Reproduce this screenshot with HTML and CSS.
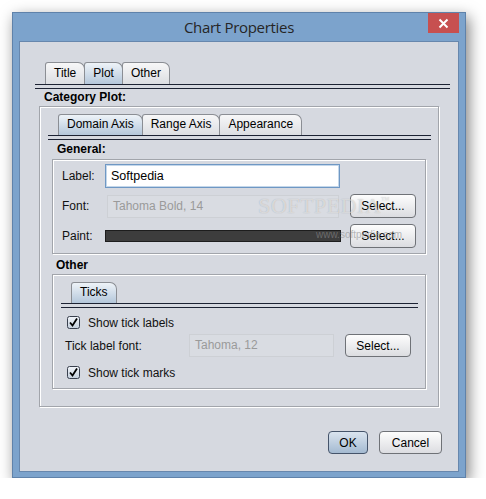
FILE: index.html
```html
<!DOCTYPE html>
<html>
<head>
<meta charset="utf-8">
<link rel="stylesheet" href="styles.css">
</head>
<body>
<div class="window">
  <div class="titlebar">
    <span class="title">Chart Properties</span>
    <span class="close"><svg width="11" height="11" viewBox="0 0 11 11"><path d="M1.5 1.5 L9.5 9.5 M9.5 1.5 L1.5 9.5" stroke="#fff" stroke-width="2"/></svg></span>
  </div>
  <div class="client">
    <div class="outer">
      <div class="tabrow">
        <span class="tab">Title</span><span class="tab sel">Plot</span><span class="tab">Other</span>
      </div>
      <div class="rule"></div>
      <div class="outer-body">
        <div class="group-title">Category Plot:</div>
        <div class="etched cat-box">
          <div class="tabrow small">
            <span class="tab sel">Domain Axis</span><span class="tab">Range Axis</span><span class="tab">Appearance</span>
          </div>
          <div class="rule"></div>
          <div class="sec-title general-title">General:</div>
          <div class="etched general-box">
            <span class="lbl">Label:</span>
            <div class="field focus">Softpedia</div>
            <span></span>
            <span class="lbl">Font:</span>
            <div class="field disabled">Tahoma Bold, 14</div>
            <button class="btn sel-btn">Select...</button>
            <span class="lbl">Paint:</span>
            <div class="paint"></div>
            <button class="btn sel-btn">Select...</button>
          </div>
          <div class="sec-title other-title">Other</div>
          <div class="etched other-box">
            <div class="tabrow small">
              <span class="tab sel">Ticks</span>
            </div>
            <div class="rule"></div>
            <div class="ticks-body">
              <label class="check-row">
                <svg class="cb" width="13" height="13" viewBox="0 0 13 13"><defs><linearGradient id="g1" x1="0" y1="0" x2="0" y2="1"><stop offset="0" stop-color="#f2f5f9"/><stop offset="1" stop-color="#c3cfdc"/></linearGradient></defs><rect x="0.5" y="0.5" width="12" height="12" rx="2" fill="url(#g1)" stroke="#39404e"/><path d="M3 6.5 L5.5 9.5 L10 2.5" fill="none" stroke="#000" stroke-width="1.8"/></svg>
                <span>Show tick labels</span>
              </label>
              <div class="font-row">
                <span class="lbl">Tick label font:</span>
                <div class="field disabled">Tahoma, 12</div>
                <button class="btn sel-btn">Select...</button>
              </div>
              <label class="check-row last">
                <svg class="cb" width="13" height="13" viewBox="0 0 13 13"><defs><linearGradient id="g2" x1="0" y1="0" x2="0" y2="1"><stop offset="0" stop-color="#f2f5f9"/><stop offset="1" stop-color="#c3cfdc"/></linearGradient></defs><rect x="0.5" y="0.5" width="12" height="12" rx="2" fill="url(#g2)" stroke="#39404e"/><path d="M3 6.5 L5.5 9.5 L10 2.5" fill="none" stroke="#000" stroke-width="1.8"/></svg>
                <span>Show tick marks</span>
              </label>
            </div>
          </div>
        </div>
      </div>
    </div>
    <div class="actions">
      <button class="btn default ok">OK</button>
      <button class="btn cancel">Cancel</button>
    </div>
  </div>
</div>
<div class="wm-logo">SOFTPEDIA<sup>™</sup></div>
<div class="wm-url">www.softpedia.com</div>
</body>
</html>
```
FILE: styles.css
```css
* { box-sizing: border-box; }
body {
  margin: 0;
  background: #fff;
  font-family: "Liberation Sans", Arial, sans-serif;
  font-size: 12px;
  color: #111;
}
.window {
  margin: 12px 0 0 12px;
  width: 454px;
  height: 466px;
  border: 1px solid #5f82aa;
  background: #7ca3cc;
  padding: 0 6px 5px;
  box-shadow: 3px 5px 14px rgba(0,0,0,0.5);
  display: flex;
  flex-direction: column;
}
.titlebar {
  height: 28px;
  margin: 0 -6px;
  position: relative;
  text-align: center;
}
.title {
  font-family: "Open Sans", "Noto Sans", sans-serif;
  font-size: 15px;
  letter-spacing: -0.3px;
  line-height: 29px;
  color: #262626;
}
.close {
  position: absolute;
  right: 6px;
  top: 0;
  width: 31px;
  height: 20px;
  background: #c75050;
  display: flex;
  align-items: center;
  justify-content: center;
}
.client {
  flex: 1;
  background: #d6d9e0;
  border: 1px solid #6787ad;
  padding-top: 20px;
  display: flex;
  flex-direction: column;
}
.outer { margin: 0 8px 0 15px; }
.tabrow {
  display: flex;
  padding-left: 10px;
  height: 22px;
  align-items: flex-end;
}
.tabrow.small { height: 21px; }
.tab {
  height: 100%;
  line-height: 20px;
  padding: 0 8px;
  border: 1px solid #8b8e94;
  border-bottom: 0;
  border-radius: 3px 7px 0 0;
  background: linear-gradient(#f7f7f8, #dcdee2);
  margin-right: -1px;
  color: #000;
}
.tabrow.small .tab { line-height: 19px; padding: 0 8px; }
.tab.sel { background: linear-gradient(#eef3f8, #b4c7db); }
.rule {
  height: 5px;
  border-top: 1px solid #1c2233;
  border-bottom: 1px solid #1c2233;
}
.outer-body { margin: 0 11px 0 4px; }
.group-title {
  height: 17px;
  line-height: 17px;
  padding-left: 5px;
  font-weight: bold;
  color: #000;
}
.etched {
  border: 1px solid #a2a5ab;
  box-shadow: inset 1px 1px 0 #fff, 1px 1px 0 #fff;
}
.cat-box {
  height: 301px;
  padding: 7px 7px 0 8px;
}
.sec-title { font-weight: bold; color: #000; }
.general-title {
  height: 19px;
  line-height: 19px;
  padding-left: 9px;
}
.general-box {
  margin: 0 5px 0 4px;
  height: 95px;
  padding: 4px 9px 0 9px;
  display: grid;
  grid-template-columns: 43px 1fr 77px;
  grid-auto-rows: 24px;
  row-gap: 6px;
  align-items: center;
}
.lbl { color: #111; }
.field {
  height: 24px;
  line-height: 22px;
  padding-left: 5px;
  border: 1px solid #c6c9cf;
}
.field.focus {
  background: #fff;
  border: 1px solid #6f98c4;
  box-shadow: inset 0 0 0 1px #c4d7ea;
  color: #000;
  font-size: 12.5px;
  margin-right: -1px;
}
.field.disabled {
  height: 23px;
  line-height: 21px;
  background: #d9dce2;
  border-color: #cdd0d5;
  color: #9a9a9a;
  margin-left: 2px;
}
.paint {
  height: 12px;
  background: #3d3d3d;
  border: 1px solid #1d1d1d;
  margin-right: -2px;
}
.btn {
  font-family: "Liberation Sans", Arial, sans-serif;
  font-size: 12px;
  color: #000;
  border: 1px solid #6f7277;
  border-radius: 4px;
  background: linear-gradient(#fdfdfd, #dcdde1);
  padding: 0;
  height: 24px;
}
.sel-btn { width: 66px; justify-self: end; }
.other-title {
  height: 20px;
  padding-top: 3px;
  line-height: 17px;
  padding-left: 8px;
}
.other-box {
  margin: 0 5px 0 4px;
  height: 115px;
  padding: 7px 7px 0 8px;
}
.ticks-body { padding-top: 4px; }
.check-row {
  display: flex;
  align-items: center;
  height: 21px;
  padding-left: 6px;
  gap: 8px;
  color: #111;
}
.check-row.last { margin-top: 5px; }
.font-row {
  margin-top: 1px;
  height: 23px;
  display: grid;
  grid-template-columns: 124px 1fr 77px;
  padding: 0 7px 0 4px;
  align-items: center;
}
.font-row .btn { height: 23px; }
.font-row .field.disabled { margin-left: 0; }
.actions {
  margin-top: auto;
  margin-bottom: 17px;
  margin-right: 16px;
  display: flex;
  justify-content: flex-end;
  gap: 11px;
}
.actions .btn { height: 23px; }
.ok { width: 40px; }
.cancel { width: 63px; }
.btn.default {
  border-color: #45546a;
  background: linear-gradient(#dae4ef, #a4bad1);
}
.wm-logo {
  position: absolute;
  left: 258px;
  top: 193px;
  font-family: "Liberation Serif", serif;
  font-size: 22px;
  letter-spacing: 0.5px;
  color: rgba(255,255,255,0.55);
  text-shadow: 0 0 1px rgba(0,0,0,0.25);
  pointer-events: none;
}
.wm-logo sup { font-size: 9px; vertical-align: 10px; }
.wm-url {
  position: absolute;
  left: 316px;
  top: 229px;
  font-size: 10px;
  color: rgba(140,140,140,0.6);
  pointer-events: none;
}
```
